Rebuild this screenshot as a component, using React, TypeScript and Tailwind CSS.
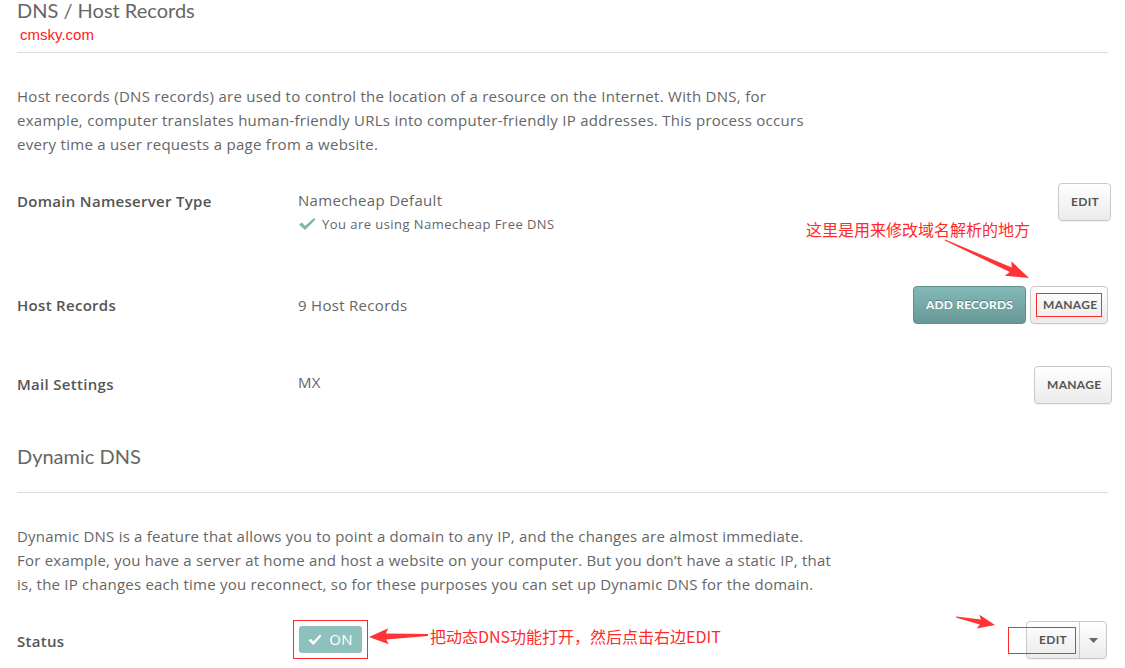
import React from "react";

const FONT = "font-['Lato','Open_Sans',sans-serif]";
const BODY = "font-['Open_Sans','Lato',sans-serif]";
const CJK = "font-['Noto_Sans_CJK_SC','Liberation_Sans',sans-serif]";

function arrowPoints(
  x1: number,
  y1: number,
  x2: number,
  y2: number,
  headLen: number,
  headW: number,
  tailW: number,
  neckW: number
) {
  const dx = x2 - x1;
  const dy = y2 - y1;
  const len = Math.sqrt(dx * dx + dy * dy);
  const ux = dx / len;
  const uy = dy / len;
  const nx = -uy;
  const ny = ux;
  const neckX = x2 - ux * headLen;
  const neckY = y2 - uy * headLen;
  const barbX = x2 - ux * headLen * 1.15;
  const barbY = y2 - uy * headLen * 1.15;
  const pts = [
    [x1 + (nx * tailW) / 2, y1 + (ny * tailW) / 2],
    [neckX + (nx * neckW) / 2, neckY + (ny * neckW) / 2],
    [barbX + (nx * headW) / 2, barbY + (ny * headW) / 2],
    [x2, y2],
    [barbX - (nx * headW) / 2, barbY - (ny * headW) / 2],
    [neckX - (nx * neckW) / 2, neckY - (ny * neckW) / 2],
    [x1 - (nx * tailW) / 2, y1 - (ny * tailW) / 2],
  ];
  return pts.map((p) => p.map((v) => v.toFixed(1)).join(",")).join(" ");
}

function GrayButton({ children, className = "" }: { children: React.ReactNode; className?: string }) {
  return (
    <button
      className={`h-[38px] rounded-[4px] border border-[#c9c9c9] bg-gradient-to-b from-white to-[#ebebeb] px-[12px] text-[12px] font-bold uppercase tracking-[0.3px] text-[#555] shadow-[0_1px_1px_rgba(0,0,0,0.06)] ${FONT} ${className}`}
    >
      {children}
    </button>
  );
}

function Row({
  label,
  children,
  right,
  className = "",
  labelPt = "pt-[7px]",
}: {
  label: string;
  children: React.ReactNode;
  right: React.ReactNode;
  className?: string;
  labelPt?: string;
}) {
  return (
    <div className={`flex items-start ${className}`}>
      <div
        className={`w-[281px] shrink-0 text-[15px] leading-[20px] font-semibold tracking-[0.3px] text-[#555] ${BODY} ${labelPt}`}
      >
        {label}
      </div>
      <div className={`flex-1 tracking-[0.3px] ${BODY}`}>{children}</div>
      <div className="flex shrink-0 items-start gap-[4px]">{right}</div>
    </div>
  );
}

export default function App() {
  return (
    <div className={`relative h-[668px] w-[1125px] overflow-hidden bg-white ${FONT}`}>
      <div className="pl-[17px] pr-[13px]">
        {/* Header */}
        <h1 className="text-[20px] leading-[20px] font-normal text-[#666]">DNS / Host Records</h1>
        <div className="mt-[6px] pl-[3px] font-['Liberation_Sans',sans-serif] text-[15px] leading-[18px] text-[#ff2020]">
          cmsky.com
        </div>
        <div className="mt-[8px] mr-[4px] h-px bg-[#dcdcdc]" />

        <p className={`mt-[31px] whitespace-nowrap text-[15px] leading-[24px] tracking-[0.28px] text-[#666] ${BODY}`}>
          Host records (DNS records) are used to control the location of a resource on the Internet. With DNS, for
          <br />
          example, computer translates human-friendly URLs into computer-friendly IP addresses. This process occurs
          <br />
          every time a user requests a page from a website.
        </p>

        {/* Domain Nameserver Type */}
        <Row
          label="Domain Nameserver Type"
          className="mt-[27px]"
          labelPt="pt-[8px]"
          right={<GrayButton className="mr-[1px] w-[53px] px-0">Edit</GrayButton>}
        >
          <div className="pt-[7px] text-[15px] leading-[20px] text-[#666]">Namecheap Default</div>
          <div className="mt-[4px] flex items-center gap-[6px] text-[13px] leading-[20px] tracking-[0.45px] text-[#666]">
            <svg width="18" height="14" viewBox="0 0 18 14" className="shrink-0">
              <path d="M1 7.5 L4 5.5 L7 9 L16 1 L17.5 2.5 L7 13 Z" fill="#7cb4b1" />
            </svg>
            You are using Namecheap Free DNS
          </div>
        </Row>

        {/* Host Records */}
        <Row
          label="Host Records"
          className="mt-[52px]"
          labelPt="pt-[9px]"
          right={
            <>
              <button
                className={`h-[38px] w-[113px] rounded-[4px] border border-[#5f908e] bg-gradient-to-b from-[#84b9b7] to-[#679896] text-[12px] font-bold uppercase tracking-[0.2px] text-white [text-shadow:0_-1px_0_rgba(0,0,0,0.25)] ${FONT}`}
              >
                Add Records
              </button>
              <GrayButton className="mr-[4px] w-[78px] px-0">Manage</GrayButton>
            </>
          }
        >
          <div className="pt-[9px] text-[15px] leading-[20px] text-[#666]">9 Host Records</div>
        </Row>

        {/* Mail Settings */}
        <Row
          label="Mail Settings"
          className="mt-[42px]"
          labelPt="pt-[8px]"
          right={<GrayButton className="w-[78px] px-0">Manage</GrayButton>}
        >
          <div className="pt-[6px] text-[15px] leading-[20px] text-[#666]">MX</div>
        </Row>

        {/* Dynamic DNS */}
        <h2 className="mt-[38px] text-[20px] leading-[28px] font-normal text-[#666]">Dynamic DNS</h2>
        <div className="mt-[22px] mr-[4px] h-px bg-[#dcdcdc]" />

        <p className={`mt-[31px] whitespace-nowrap text-[15px] leading-[24px] tracking-[0.22px] text-[#666] ${BODY}`}>
          Dynamic DNS is a feature that allows you to point a domain to any IP, and the changes are almost immediate.
          <br />
          For example, you have a server at home and host a website on your computer. But you don’t have a static IP, that
          <br />
          is, the IP changes each time you reconnect, so for these purposes you can set up Dynamic DNS for the domain.
        </p>

        <Row
          label="Status"
          className="mt-[25px]"
          labelPt="pt-[10px]"
          right={
            <div className="mr-[5px] flex h-[38px] rounded-[4px] border border-[#c9c9c9] bg-gradient-to-b from-white to-[#ebebeb] shadow-[0_1px_1px_rgba(0,0,0,0.06)]">
              <span className="flex w-[53px] items-center justify-center border-r border-[#c9c9c9] text-[12px] font-bold tracking-[0.3px] text-[#555]">
                EDIT
              </span>
              <span className="flex w-[26px] items-center justify-center">
                <svg width="9" height="5" viewBox="0 0 9 5">
                  <path d="M0 0 H9 L4.5 5 Z" fill="#666" />
                </svg>
              </span>
            </div>
          }
        >
          <div className="-ml-[5px] mt-[-1px] inline-flex border border-[#ff2a2a] p-[5px]">
            <div className="flex h-[27px] w-[63px] items-center justify-center gap-[7px] rounded-[3px] bg-[#8ec0be] text-[15px] text-white">
              <svg width="14" height="12" viewBox="0 0 14 12">
                <path d="M0.5 6.5 L3 4.8 L5.3 7.6 L12 0.5 L13.5 2 L5.3 11 Z" fill="#fff" />
              </svg>
              ON
            </div>
          </div>
        </Row>
      </div>

      {/* Annotations */}
      <div className={`absolute left-[806px] top-[219px] text-[16px] leading-[20px] text-[#ff2a2a] ${CJK}`}>
        这里是用来修改域名解析的地方
      </div>
      <div className={`absolute left-[430px] top-[626px] text-[16px] leading-[20px] text-[#ff2a2a] ${CJK}`}>
        把动态DNS功能打开，然后点击右边EDIT
      </div>
      <div className="absolute left-[1036px] top-[293px] h-[24px] w-[66px] border border-[#ff2a2a]" />
      <div className="absolute left-[1008px] top-[627px] h-[27px] w-[68px] border border-[#ff2a2a]" />

      <svg className="pointer-events-none absolute left-0 top-0" width="1125" height="668">
        <polygon points={arrowPoints(945, 240, 1029, 278, 20, 16, 1, 5)} fill="#ff3333" />
        <polygon points={arrowPoints(428, 635, 369, 637, 17, 16, 2, 6)} fill="#ff3333" />
        <polygon points={arrowPoints(956, 617, 995, 625, 15, 14, 1, 5)} fill="#ff3333" />
      </svg>
    </div>
  );
}
